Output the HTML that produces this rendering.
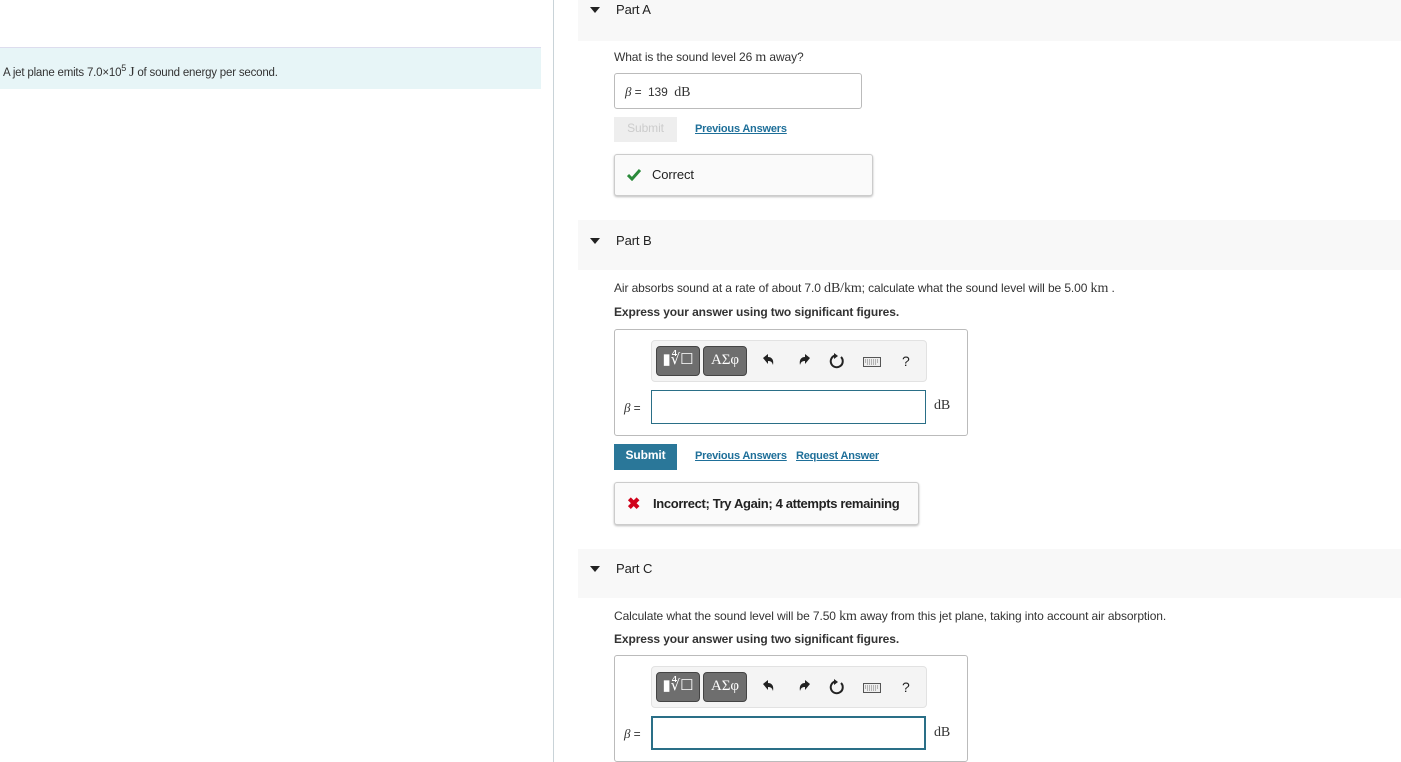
<!DOCTYPE html>
<html><head><meta charset="utf-8"><style>
*{margin:0;padding:0;box-sizing:border-box}
body{width:1401px;height:762px;position:relative;overflow:hidden;background:#fff;font-family:"Liberation Sans",Arial,sans-serif;font-size:12px;color:#333;letter-spacing:-0.1px}
.a{position:absolute}
.serif{font-family:"Liberation Serif",serif}
.band{position:absolute;left:578px;width:823px;background:#f8f8f8}
.tri{position:absolute;left:590px;width:0;height:0;border-left:5px solid transparent;border-right:5px solid transparent;border-top:6px solid #222}
.ph{position:absolute;left:616px;font-size:13px;color:#222}
.lnk{color:#1e6f99;text-decoration:underline;font-weight:bold;font-size:11px;letter-spacing:-0.2px}
.box{position:absolute;border:1px solid #bbb;border-radius:3px;background:#fff}
.fb{position:absolute;border:1px solid #ccc;border-radius:3px;background:#fafafa;box-shadow:0 1px 2px #bbb;font-size:13px;color:#222}
.tb{position:absolute;left:651px;width:276px;height:42px;background:#f4f4f4;border:1px solid #e2e2e2;border-radius:4px}
.btn{position:absolute;top:5px;width:44px;height:30px;background:#6e6e6e;border:1px solid #444;border-radius:4px;color:#fff;font-family:"Liberation Serif",serif;font-size:15px;text-align:center;line-height:26px}
.ic{position:absolute;top:12px}
.inp{position:absolute;left:651px;width:275px;height:34px;border:1px solid #2a6f87}
</style></head><body>
<div class="a" style="left:0;top:47px;width:541px;height:42px;background:#e7f5f7;border-top:1px solid #dde"></div>
<div class="a" style="left:3px;top:63px;font-size:11.5px;letter-spacing:-0.2px">A jet plane emits 7.0×10<sup style="font-size:9px">5</sup> <span class="serif" style="font-size:14px">J</span> of sound energy per second.</div>
<div class="a" style="left:553px;top:0;width:1px;height:762px;background:#c9d3d8"></div>

<div class="band" style="top:0;height:41px"></div>
<div class="tri" style="top:7px"></div><div class="ph" style="top:2px">Part A</div>
<div class="a" style="left:614px;top:50px">What is the sound level 26 <span class="serif" style="font-size:14px">m</span> away?</div>
<div class="box" style="left:614px;top:73px;width:248px;height:36px"><span class="a" style="left:10px;top:10px"><i class="serif" style="font-size:13px">β</i> = &nbsp;139 &nbsp;<span class="serif" style="font-size:14px">dB</span></span></div>
<div class="a" style="left:614px;top:117px;width:63px;height:25px;background:#eee;color:#ccc;text-align:center;line-height:23px">Submit</div>
<div class="a lnk" style="left:695px;top:123px">Previous Answers</div>
<div class="fb" style="left:614px;top:154px;width:259px;height:42px"><svg class="a" style="left:12px;top:14px" width="14" height="12" viewBox="0 0 14 12"><path d="M1 6l4 4 8-9" stroke="#2a8a3a" stroke-width="3" fill="none"/></svg><span class="a" style="left:37px;top:12px">Correct</span></div>

<div class="band" style="top:220px;height:50px"></div>
<div class="tri" style="top:238px"></div><div class="ph" style="top:233px">Part B</div>
<div class="a" style="left:614px;top:281px">Air absorbs sound at a rate of about 7.0 <span class="serif" style="font-size:14px">dB/km</span>; calculate what the sound level will be 5.00 <span class="serif" style="font-size:14px">km</span> .</div>
<div class="a" style="left:614px;top:305px;font-weight:bold">Express your answer using two significant figures.</div>
<div class="box" style="left:614px;top:329px;width:354px;height:107px"></div>
<div class="tb" style="top:340px"><div class="btn" style="left:4px">▮∜☐</div><div class="btn" style="left:51px">ΑΣφ</div>
<svg class="ic" style="left:110px" width="14" height="14" viewBox="0 0 14 14"><path d="M1 5l5-4v3c4 0 6 3 5 8-1-3-2-4-5-4v3z" fill="#222"/></svg>
<svg class="ic" style="left:145px" width="14" height="14" viewBox="0 0 14 14"><path d="M13 5l-5-4v3c-4 0-6 3-5 8 1-3 2-4 5-4v3z" fill="#222"/></svg>
<svg class="ic" style="left:177px" width="16" height="16" viewBox="0 0 16 16"><path d="M12 4a6 6 0 1 1-6-1.5" stroke="#222" stroke-width="2" fill="none"/><path d="M5 0l4 3-4 3z" fill="#222"/></svg>
<svg class="ic" style="left:211px;top:16px" width="18" height="10" viewBox="0 0 18 10"><rect x="0.5" y="0.5" width="17" height="9" fill="#eee" stroke="#555"/><path d="M2 3h14M2 5h14M4 7h10" stroke="#777" stroke-dasharray="1 1"/></svg>
<span class="ic" style="left:250px;top:12px;font-size:14px;color:#222">?</span></div>
<div class="a" style="left:624px;top:400px"><i class="serif" style="font-size:13px">β</i> =</div>
<div class="inp" style="top:390px"></div>
<div class="a serif" style="left:934px;top:398px;font-size:14px">dB</div>
<div class="a" style="left:614px;top:444px;width:63px;height:26px;background:#2a7799;color:#fff;font-weight:bold;text-align:center;line-height:23px">Submit</div>
<div class="a lnk" style="left:695px;top:450px">Previous Answers</div>
<div class="a lnk" style="left:796px;top:450px">Request Answer</div>
<div class="fb" style="left:614px;top:482px;width:305px;height:43px"><span class="a" style="left:12px;top:11px;color:#d0021b;font-size:16px;font-weight:bold">✖</span><span class="a" style="left:38px;top:13px;font-weight:bold;letter-spacing:-0.35px">Incorrect; Try Again; 4 attempts remaining</span></div>

<div class="band" style="top:549px;height:49px"></div>
<div class="tri" style="top:566px"></div><div class="ph" style="top:561px">Part C</div>
<div class="a" style="left:614px;top:609px">Calculate what the sound level will be 7.50 <span class="serif" style="font-size:14px">km</span> away from this jet plane, taking into account air absorption.</div>
<div class="a" style="left:614px;top:632px;font-weight:bold">Express your answer using two significant figures.</div>
<div class="box" style="left:614px;top:655px;width:354px;height:107px"></div>
<div class="tb" style="top:666px"><div class="btn" style="left:4px">▮∜☐</div><div class="btn" style="left:51px">ΑΣφ</div>
<svg class="ic" style="left:110px" width="14" height="14" viewBox="0 0 14 14"><path d="M1 5l5-4v3c4 0 6 3 5 8-1-3-2-4-5-4v3z" fill="#222"/></svg>
<svg class="ic" style="left:145px" width="14" height="14" viewBox="0 0 14 14"><path d="M13 5l-5-4v3c-4 0-6 3-5 8 1-3 2-4 5-4v3z" fill="#222"/></svg>
<svg class="ic" style="left:177px" width="16" height="16" viewBox="0 0 16 16"><path d="M12 4a6 6 0 1 1-6-1.5" stroke="#222" stroke-width="2" fill="none"/><path d="M5 0l4 3-4 3z" fill="#222"/></svg>
<svg class="ic" style="left:211px;top:16px" width="18" height="10" viewBox="0 0 18 10"><rect x="0.5" y="0.5" width="17" height="9" fill="#eee" stroke="#555"/><path d="M2 3h14M2 5h14M4 7h10" stroke="#777" stroke-dasharray="1 1"/></svg>
<span class="ic" style="left:250px;top:12px;font-size:14px;color:#222">?</span></div>
<div class="a" style="left:624px;top:726px"><i class="serif" style="font-size:13px">β</i> =</div>
<div class="inp" style="top:716px;border-width:2px"></div>
<div class="a serif" style="left:934px;top:725px;font-size:14px">dB</div>
</body></html>
